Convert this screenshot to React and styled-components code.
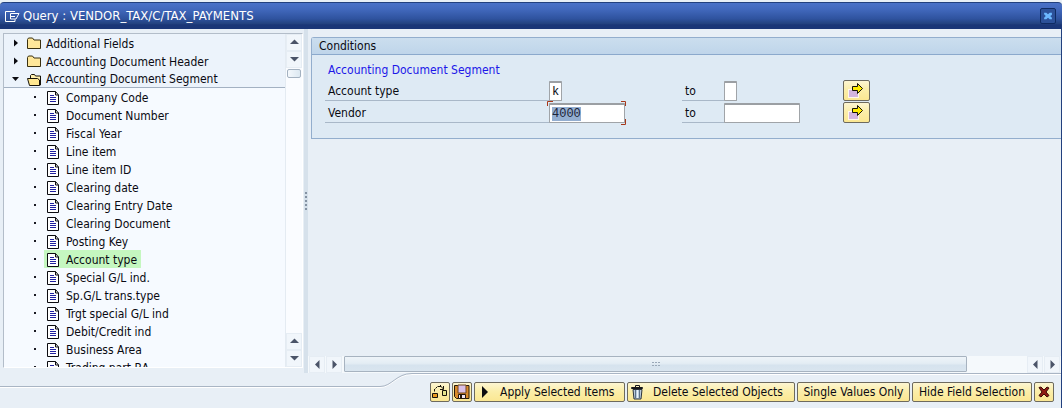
import React, { useEffect, useRef } from "react";
import styled, { createGlobalStyle, css } from "styled-components";

const Global = createGlobalStyle`
  *, *::before, *::after { box-sizing: border-box; }
  body {
    margin: 0;
    background: #e8eff6;
    color: #0a0a12;
    font: 12px/18px "DejaVu Sans Condensed", Tahoma, "DejaVu Sans", sans-serif;
  }
  button, input { font: inherit; color: inherit; }
`;

const Dialog = styled.main`
  display: flex;
  flex-direction: column;
  height: 100vh;
  padding-top: 2px;
  background: #e8eff6;
`;

const TitleBar = styled.header`
  display: flex;
  align-items: center;
  gap: 3px;
  flex: none;
  height: 27px;
  padding: 0 6px 0 5px;
  border-top: 1px solid #22407e;
  border-radius: 4px 4px 0 0;
  background: linear-gradient(#4a72c8 0, #4168bc 25%, #2f539f 60%, #23427f 80%, #1a3677 84%, #1a3677 100%);
  color: #fff;
`;

const Title = styled.h1`
  flex: 1;
  margin: 0;
  font-size: 13px;
  font-weight: normal;
  line-height: 20px;
`;

const CloseButton = styled.button`
  display: grid;
  place-items: center;
  width: 16px;
  height: 16px;
  padding: 0;
  border: 1px solid #0f2b62;
  border-radius: 2px;
  background: #2c5199;
`;

const Body = styled.div`
  display: flex;
  flex: 1;
  min-height: 0;
  border-right: 1px solid #22407e;
`;

const TreePanel = styled.nav`
  display: flex;
  flex: none;
  width: 300px;
  margin: 4px 1px 5px 3px;
  border: 1px solid #b3bdc9;
  border-right-color: #fff;
  border-bottom-color: #fff;
  background: #f6faff;
`;

const TreeArea = styled.div`
  flex: 1;
  min-width: 0;
  overflow: hidden;
`;

const Branches = styled.ul`
  margin: 0;
  padding: 0;
  list-style: none;
  background: #ecf3fb;
  border-bottom: 1px solid #a3b1c2;
`;

const Leaves = styled.ul`
  margin: 0;
  padding: 0;
  list-style: none;
`;

const Branch = styled.li`
  display: flex;
  align-items: center;
  height: 18px;
  padding: 1px 0 0 8px;
  white-space: nowrap;
  &:last-child { height: 17px; }
  svg { flex: none; }
  svg + svg { margin: 0 4px 0 7px; }
`;

const Leaf = styled.li`
  display: flex;
  align-items: center;
  height: 18px;
  padding-left: 30px;
  white-space: nowrap;
  &::before {
    content: "";
    width: 2px;
    height: 2px;
    margin-right: 8px;
    background: #1a1a22;
  }
`;

const LeafLabel = styled.span`
  display: flex;
  align-items: center;
  gap: 6px;
  height: 18px;
  padding: 1px 4px 0 3px;
  background: ${(p) => (p.$selected ? "#c5f7c0" : "transparent")};
`;

const VScroll = styled.div`
  display: flex;
  flex-direction: column;
  flex: none;
  width: 17px;
  background: #fafcff;
  border-left: 1px solid #e4ebf2;
`;

const ScrollButton = styled.button`
  display: grid;
  place-items: center;
  flex: none;
  width: 16px;
  height: 17px;
  padding: 0;
  border: 1px solid #e6edf4;
  background: #f1f6fb;
`;

const VThumb = styled.div`
  width: 14px;
  height: 9px;
  margin: 1px;
  border: 1px solid #a3b1c0;
  border-radius: 2px;
  background: linear-gradient(90deg, #f4f8fc, #dce8f1);
`;

const Spacer = styled.div`
  flex: 1;
`;

const Splitter = styled.div`
  display: grid;
  place-items: center;
  flex: none;
  width: 4px;
  background: #d6e1eb;
`;

const Content = styled.div`
  display: flex;
  flex-direction: column;
  flex: 1;
  min-width: 0;
`;

const Group = styled.section`
  margin: 8px 0 0 3px;
  border: 1px solid #93aecd;
  border-right: 0;
  border-radius: 3px 0 0 0;
  background: #deeaf4;
`;

const GroupTitle = styled.h2`
  height: 17px;
  margin: 0;
  padding-left: 7px;
  border-bottom: 1px solid #8ba9cc;
  background: linear-gradient(#cbdeee, #bfd5ea);
  font-size: 12px;
  font-weight: normal;
  line-height: 16px;
`;

const GroupBody = styled.div`
  padding: 5px 0 14px 13px;
`;

const Subheading = styled.h3`
  margin: 0;
  padding-left: 3px;
  color: #1c17e8;
  font-size: 12px;
  font-weight: normal;
  line-height: 20px;
`;

const CriteriaRow = styled.div`
  display: grid;
  grid-template-columns: 224px 133px 42px 119px 27px;
  align-items: end;
  padding-bottom: 1px;
`;

const FieldLabel = styled.label`
  height: 21px;
  padding-left: 3px;
  border-bottom: 1px solid #a9b8c8;
  line-height: 22px;
`;

const FieldBox = styled.span`
  position: relative;
  display: block;
  width: ${(p) => (p.$wide ? 76 : 13)}px;
  height: 20px;
`;

const Field = styled.input`
  display: block;
  width: 100%;
  height: 20px;
  padding: 0 0 0 2px;
  border: 1px solid #a0a4a8;
  border-top: 2px solid #9b9fa3;
  border-radius: 1px;
  outline: none;
  background: #fff;
  font: 12px/16px "Liberation Mono", monospace;
  &::selection { background: #93aed0; color: #1c2438; }
`;

const FocusCorners = styled.svg`
  position: absolute;
  top: -2px;
  left: -2px;
  pointer-events: none;
`;

const goldButton = css`
  border: 1px solid #6d6a5e;
  border-radius: 2px;
  background: linear-gradient(#fdf6d2, #fbeeaa 45%, #fbe792);
`;

const MoreButton = styled.button`
  display: grid;
  place-items: center;
  height: 21px;
  padding: 0;
  ${goldButton}
`;

const HScroll = styled.div`
  display: flex;
  gap: 1px;
  height: 17px;
  margin-top: auto;
  padding: 0 1px;
  background: #f5f9fc;
`;

const HThumb = styled.div`
  display: grid;
  place-items: center;
  flex: 623 1 0;
  height: 16px;
  margin-left: 1px;
  border: 1px solid #a7b3c0;
  border-radius: 1px;
  background: linear-gradient(#eef4f9, #e4edf4 45%, #d6e3ee 60%, #d9e5ef);
`;

const HTrack = styled.div`
  flex: 58 1 0;
`;

const Footer = styled.footer`
  display: flex;
  flex: none;
  height: 35px;
  border-right: 1px solid #22407e;
  > svg { flex: none; }
`;

const Actions = styled.div`
  display: flex;
  align-items: flex-start;
  justify-content: flex-end;
  flex: 1;
  gap: 2px;
  padding: 8px 7px 0 0;
  border-top: 1px solid #a9b5c4;
  box-shadow: inset 0 1px #fff;
`;

const ActionButton = styled.button`
  display: flex;
  align-items: center;
  justify-content: ${(p) => (p.$lead ? "flex-start" : "center")};
  flex: none;
  gap: 6px;
  width: ${(p) => p.$width || 20}px;
  height: 20px;
  padding: 0 0 0 ${(p) => (p.$lead ? 3 : 0)}px;
  white-space: nowrap;
  ${goldButton}
`;

const Twisty = ({ open }) => (
  <svg width="8" height="9" viewBox="0 0 8 9" aria-hidden="true">
    <path d={open ? "M0 2h7L3.5 6z" : "M2 0.5v7L6 4z"} fill="#0b0b10" />
  </svg>
);

const Folder = ({ open }) => (
  <svg width="15" height="13" viewBox="0 0 15 13" aria-hidden="true">
    {open ? (
      <>
        <path d="M3.500 6V2.500l1-1h3l1 1.500h5v9h-2" fill="#fff0b0" stroke="#16130a" />
        <path d="M.5 5.500h10l2 1.500v5.500h-10z" fill="#ffe790" stroke="#16130a" />
      </>
    ) : (
      <path d="M.5 11.500v-9l1-1.500h4l1.500 2h6.500v8.500z" fill="#ffe79a" stroke="#3a3010" />
    )}
  </svg>
);

const Doc = () => (
  <svg width="13" height="14" viewBox="0 0 13 14" aria-hidden="true">
    <path d="M.5.5h8l3 3.500v9.500h-11z" fill="#fff" stroke="#0b0b10" />
    <path d="M8.500.5v3.500h3" fill="none" stroke="#0b0b10" />
    <path d="M3 4.500h4M3 6.500h6M3 8.500h6M3 10.500h6" stroke="#2020a0" />
  </svg>
);

const arrows = {
  up: "M0 6L4.500 1.500 9 6z",
  down: "M0 2h9L4.500 6.500z",
  left: "M6.500 0v9L2 4.500z",
  right: "M2.500 0v9L7 4.500z",
};

const Arrow = ({ dir }) => (
  <svg width="9" height="9" viewBox="0 0 9 9" aria-hidden="true">
    <path d={arrows[dir]} fill="#4b5468" />
  </svg>
);

const MoreIcon = () => (
  <svg width="17" height="17" viewBox="0 0 17 17" aria-hidden="true">
    <path d="M0 7h11v9H0z" fill="#fff8ea" />
    <path d="M1 8h9v7H1z" fill="#d3b4de" />
    <path d="M4.500 4.500h5V1.500l5 5-5 5V8.500h-5z" fill="#ffec00" stroke="#16130a" />
  </svg>
);

const LogoIcon = () => (
  <svg width="15" height="13" viewBox="0 0 15 13" fill="none" stroke="#fff" aria-hidden="true">
    <path d="M10 1.500H.5v10H10V9.500" />
    <path d="M10 3.500H5.500V9H11l3-5.500h-6M6 6.500h4" />
  </svg>
);

const ExitIcon = () => (
  <svg width="10" height="10" viewBox="0 0 9 8" aria-hidden="true">
    <path d="M1 1h2l1.500 1.500L6 1h2v2L6.500 4 8 5.500V7H6L4.500 5.500 3 7H1V5.500L2.500 4 1 2.500z" fill="#6cb8ff" />
  </svg>
);

const VariantIcon = () => (
  <svg width="16" height="16" viewBox="0 0 16 16" aria-hidden="true">
    <path d="M.5 9.500h5v4h-5z" fill="#e89a20" stroke="#16130a" />
    <path d="M10.500 6.500h4v5h-4z" fill="#e6e48c" stroke="#16130a" />
    <path d="M2.500 7.500V5M3.500 4.500l2-2M6 2.500h3M8.500 1v1l3 3M11.500 2v3.500H8" fill="none" stroke="#16130a" />
  </svg>
);

const SaveIcon = () => (
  <svg width="16" height="16" viewBox="0 0 16 16" aria-hidden="true">
    <path d="M.5 1.500h14.500v13H2.500l-2-2z" fill="#d98a2c" stroke="#24180c" />
    <path d="M4 1h8v8H4z" fill="#d9bfe6" stroke="#6e4620" />
    <path d="M4.500 10.500h7v4h-7z" fill="#f2e6f4" stroke="#24180c" />
    <path d="M6 11h2v3H6z" fill="#24180c" />
  </svg>
);

const PlayIcon = () => (
  <svg width="16" height="12" viewBox="0 0 16 12" aria-hidden="true">
    <path d="M4 0v12L10 6z" fill="#0b0b10" />
  </svg>
);

const TrashIcon = () => (
  <svg width="16" height="15" viewBox="0 0 16 15" aria-hidden="true">
    <path d="M4.500 2V.5h4V2" fill="none" stroke="#16161a" />
    <path d="M.5 2.500h11v1H.5z" fill="#8da0b4" stroke="#16161a" />
    <path d="M2 4.500h9l-1 9.500H3z" fill="#b9cbdd" stroke="#2b333c" />
    <path d="M4.500 5v8M8.500 5v8" stroke="#5e7186" />
    <path d="M6.500 5v8" stroke="#edf4fa" />
  </svg>
);

const CancelIcon = () => (
  <svg width="12" height="12" viewBox="0 0 12 12" aria-hidden="true">
    <path d="M1 1.500L3 1l3 3 3-3 2 1-3 4 3 3.500L9 11 6 8l-3 3-2-1.500L4 6z" fill="#8e1c14" stroke="#3c0a08" />
  </svg>
);

const fields = [
  "Company Code", "Document Number", "Fiscal Year", "Line item", "Line item ID",
  "Clearing date", "Clearing Entry Date", "Clearing Document", "Posting Key",
  "Account type", "Special G/L ind.", "Sp.G/L trans.type", "Trgt special G/L ind",
  "Debit/Credit ind", "Business Area", "Trading part.BA",
];

function Criteria({ id, label, value, wide, active }) {
  const ref = useRef(null);
  useEffect(() => {
    if (active) {
      ref.current.focus();
      ref.current.select();
    }
  }, [active]);
  return (
    <CriteriaRow>
      <FieldLabel htmlFor={`${id}-from`}>{label}</FieldLabel>
      <FieldBox $wide={wide}>
        <Field ref={ref} id={`${id}-from`} defaultValue={value} spellCheck={false} />
        {active && (
          <FocusCorners width="80" height="24" aria-hidden="true">
            <path d="M.5 5V.5H6M74 .5h4.500V5M78.500 18v5.500H74" fill="none" stroke="#a8381a" />
          </FocusCorners>
        )}
      </FieldBox>
      <FieldLabel htmlFor={`${id}-to`}>to</FieldLabel>
      <FieldBox $wide={wide}>
        <Field id={`${id}-to`} />
      </FieldBox>
      <MoreButton type="button" aria-label={`Multiple selection for ${label}`}>
        <MoreIcon />
      </MoreButton>
    </CriteriaRow>
  );
}

export default function App() {
  return (
    <>
      <Global />
      <Dialog>
        <TitleBar>
          <LogoIcon />
          <Title>Query : VENDOR_TAX/C/TAX_PAYMENTS</Title>
          <CloseButton type="button" aria-label="Close"><ExitIcon /></CloseButton>
        </TitleBar>
        <Body>
          <TreePanel aria-label="Field selection">
            <TreeArea>
              <Branches>
                <Branch><Twisty /><Folder />Additional Fields</Branch>
                <Branch><Twisty /><Folder />Accounting Document Header</Branch>
                <Branch><Twisty open /><Folder open />Accounting Document Segment</Branch>
              </Branches>
              <Leaves>
                {fields.map((name) => (
                  <Leaf key={name}>
                    <LeafLabel $selected={name === "Account type"}><Doc />{name}</LeafLabel>
                  </Leaf>
                ))}
              </Leaves>
            </TreeArea>
            <VScroll>
              <ScrollButton type="button" aria-label="Scroll up"><Arrow dir="up" /></ScrollButton>
              <ScrollButton type="button" aria-label="Scroll down"><Arrow dir="down" /></ScrollButton>
              <VThumb />
              <Spacer />
              <ScrollButton type="button" aria-label="Page up"><Arrow dir="up" /></ScrollButton>
              <ScrollButton type="button" aria-label="Page down"><Arrow dir="down" /></ScrollButton>
            </VScroll>
          </TreePanel>
          <Splitter>
            <svg width="2" height="18" aria-hidden="true">
              <path d="M1 0v18" stroke="#8492a3" strokeWidth="2" strokeDasharray="2 2" />
            </svg>
          </Splitter>
          <Content>
            <Group>
              <GroupTitle>Conditions</GroupTitle>
              <GroupBody>
                <Subheading>Accounting Document Segment</Subheading>
                <Criteria id="type" label="Account type" value="k" />
                <Criteria id="vendor" label="Vendor" value="4000" wide active />
              </GroupBody>
            </Group>
            <HScroll>
              <ScrollButton type="button" aria-label="Scroll left"><Arrow dir="left" /></ScrollButton>
              <ScrollButton type="button" aria-label="Scroll right"><Arrow dir="right" /></ScrollButton>
              <HThumb>
                <svg width="8" height="5" aria-hidden="true">
                  <path d="M0 .5h8M0 3.500h8" stroke="#9aa8b8" strokeDasharray="2 1" />
                </svg>
              </HThumb>
              <HTrack />
              <ScrollButton type="button" aria-label="Page left"><Arrow dir="left" /></ScrollButton>
              <ScrollButton type="button" aria-label="Page right"><Arrow dir="right" /></ScrollButton>
            </HScroll>
          </Content>
        </Body>
        <Footer>
          <svg width="412" height="16" fill="none" aria-hidden="true">
            <path d="M0 14.500h380c12 0 16-13 32-13" stroke="#fff" />
            <path d="M0 13.500h380c12 0 16-13 32-13" stroke="#a9b5c4" />
          </svg>
          <Actions>
            <ActionButton type="button" aria-label="Get variant"><VariantIcon /></ActionButton>
            <ActionButton type="button" aria-label="Save"><SaveIcon /></ActionButton>
            <ActionButton type="button" $lead $width={151}><PlayIcon />Apply Selected Items</ActionButton>
            <ActionButton type="button" $lead $width={168}><TrashIcon />Delete Selected Objects</ActionButton>
            <ActionButton type="button" $width={113}>Single Values Only</ActionButton>
            <ActionButton type="button" $width={120}>Hide Field Selection</ActionButton>
            <ActionButton type="button" aria-label="Cancel"><CancelIcon /></ActionButton>
          </Actions>
        </Footer>
      </Dialog>
    </>
  );
}
